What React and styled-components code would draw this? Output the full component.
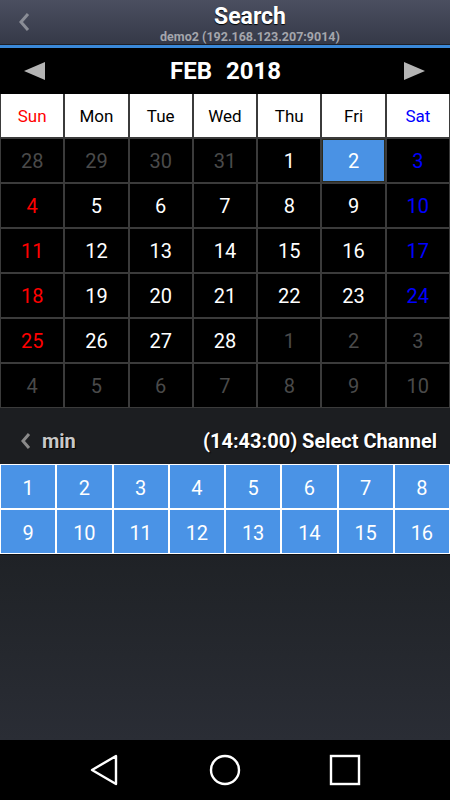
import React from 'react';
import styled, { createGlobalStyle } from 'styled-components';

const GlobalStyle = createGlobalStyle`
  html, body {
    margin: 0;
    padding: 0;
    background: #000;
  }
  body {
    font-family: Roboto, "Noto Sans", "Liberation Sans", sans-serif;
  }
  * {
    box-sizing: border-box;
  }
`;

const Screen = styled.div`
  display: flex;
  flex-direction: column;
  width: 450px;
  height: 800px;
  overflow: hidden;
`;

const TopBar = styled.header`
  position: relative;
  display: flex;
  flex-direction: column;
  align-items: center;
  height: 48px;
  padding: 3px 0 0 50px;
  background: linear-gradient(#4b4f60, #343847);
  border-bottom: 3px solid #3a88d8;
  box-shadow: inset 0 -1px 0 #1d1f26;
`;

const BackButton = styled.div`
  position: absolute;
  left: 14px;
  top: 10px;
  width: 20px;
  height: 24px;
  display: flex;
  align-items: center;
  justify-content: center;
`;

const Title = styled.div`
  color: #fff;
  font-size: 23px;
  font-weight: 700;
  line-height: 27px;
  text-shadow: 0 1px 1px #000;
`;

const Subtitle = styled.div`
  color: #a4a6ac;
  font-size: 12.5px;
  font-weight: 700;
  line-height: 13px;
`;

const MonthBar = styled.div`
  display: flex;
  align-items: center;
  justify-content: space-between;
  height: 46px;
  padding: 0 25px 0 24px;
  background: #000;
`;

const Arrow = styled.div`
  width: 0;
  height: 0;
  border-top: 9px solid transparent;
  border-bottom: 9px solid transparent;
  ${(p) =>
    p.$dir === 'left'
      ? 'border-right: 21px solid #b4b4b4;'
      : 'border-left: 21px solid #b4b4b4;'}
`;

const MonthLabel = styled.div`
  color: #fff;
  font-size: 24px;
  font-weight: 700;
  white-space: pre;
  word-spacing: 1px;
  padding-left: 2px;
`;

const Calendar = styled.div`
  display: grid;
  grid-template-columns: repeat(7, 1fr);
  grid-auto-rows: 43px;
  gap: 2px;
  padding: 0 1px 1px;
  background: #3b3b3b;
`;

const DayName = styled.div`
  display: flex;
  align-items: center;
  justify-content: center;
  background: #fff;
  font-size: 17px;
  color: ${(p) => p.$color};
`;

const DateCell = styled.div`
  display: flex;
  align-items: center;
  justify-content: center;
  background: ${(p) => (p.$selected ? '#4a92e4' : '#000')};
  box-shadow: ${(p) => (p.$selected ? 'inset 0 0 0 1px #2a2a1e' : 'none')};
  font-size: 20px;
  color: ${(p) => p.$color};
`;

const TimeRow = styled.div`
  display: flex;
  align-items: center;
  justify-content: space-between;
  height: 56px;
  padding: 10px 13px 0 20px;
  background: #1c1e21;
`;

const MinButton = styled.div`
  display: flex;
  align-items: center;
  gap: 11px;
  color: #c8c8c8;
  font-size: 20px;
  font-weight: 700;
  text-shadow: 1px 1px 1px #000;
`;

const TimeLabel = styled.div`
  color: #fff;
  font-size: 20px;
  font-weight: 700;
  text-shadow: 1px 1px 1px #000;
`;

const Channels = styled.div`
  display: grid;
  grid-template-columns: repeat(8, 1fr);
  grid-auto-rows: 43px;
  gap: 2px;
  padding: 1px;
  background: #fff;
  border-bottom: 1px solid #111;
`;

const Channel = styled.div`
  display: flex;
  align-items: center;
  justify-content: center;
  background: #4a93e6;
  color: #fff;
  font-size: 20px;
  padding-top: 2px;
`;

const Body = styled.div`
  flex: 1;
  background: linear-gradient(#1f2226, #2a2d35);
`;

const NavBar = styled.nav`
  display: flex;
  align-items: center;
  justify-content: center;
  height: 60px;
  background: #000;
`;

const NavButton = styled.div`
  display: flex;
  align-items: center;
  justify-content: center;
  width: 120px;
  height: 60px;
`;

const dayNames = [
  ['Sun', '#ff0000'],
  ['Mon', '#000'],
  ['Tue', '#000'],
  ['Wed', '#000'],
  ['Thu', '#000'],
  ['Fri', '#000'],
  ['Sat', '#0000ff'],
];

const buildDates = () => {
  const cells = [];
  [28, 29, 30, 31].forEach((d) => cells.push({ d, other: true }));
  for (let d = 1; d <= 28; d++) cells.push({ d });
  for (let d = 1; d <= 10; d++) cells.push({ d, other: true });
  return cells;
};

function dateColor(cell, i) {
  if (cell.other) return '#4a4a4a';
  if (i % 7 === 0) return '#ff0000';
  if (i % 7 === 6) return '#0000ff';
  return '#fff';
}

export default function App() {
  const dates = buildDates();
  const channels = Array.from({ length: 16 }, (_, i) => i + 1);

  return (
    <>
      <GlobalStyle />
      <Screen>
        <TopBar>
          <BackButton>
            <svg width="12" height="20" viewBox="0 0 12 20">
              <path d="M10 2 L3 10 L10 18" fill="none" stroke="#8a8d96" strokeWidth="3" />
            </svg>
          </BackButton>
          <Title>Search</Title>
          <Subtitle>demo2 (192.168.123.207:9014)</Subtitle>
        </TopBar>

        <MonthBar>
          <Arrow $dir="left" />
          <MonthLabel>FEB  2018</MonthLabel>
          <Arrow $dir="right" />
        </MonthBar>

        <Calendar>
          {dayNames.map(([name, color]) => (
            <DayName key={name} $color={color}>
              {name}
            </DayName>
          ))}
          {dates.map((cell, i) => {
            const selected = !cell.other && cell.d === 2;
            return (
              <DateCell key={i} $selected={selected} $color={selected ? '#fff' : dateColor(cell, i)}>
                {cell.d}
              </DateCell>
            );
          })}
        </Calendar>

        <TimeRow>
          <MinButton>
            <svg width="11" height="18" viewBox="0 0 11 18">
              <path d="M9 2 L3 9 L9 16" fill="none" stroke="#8a8a8a" strokeWidth="3" />
            </svg>
            min
          </MinButton>
          <TimeLabel>(14:43:00) Select Channel</TimeLabel>
        </TimeRow>

        <Channels>
          {channels.map((n) => (
            <Channel key={n}>{n}</Channel>
          ))}
        </Channels>

        <Body />

        <NavBar>
          <NavButton>
            <svg width="30" height="32" viewBox="0 0 30 32">
              <path d="M26 2 L26 30 L2 16 Z" fill="none" stroke="#fff" strokeWidth="2.4" strokeLinejoin="round" />
            </svg>
          </NavButton>
          <NavButton>
            <svg width="32" height="32" viewBox="0 0 32 32">
              <circle cx="16" cy="16" r="14" fill="none" stroke="#fff" strokeWidth="2.4" />
            </svg>
          </NavButton>
          <NavButton>
            <svg width="32" height="32" viewBox="0 0 32 32">
              <rect x="2" y="2" width="28" height="28" fill="none" stroke="#fff" strokeWidth="2.4" />
            </svg>
          </NavButton>
        </NavBar>
      </Screen>
    </>
  );
}
